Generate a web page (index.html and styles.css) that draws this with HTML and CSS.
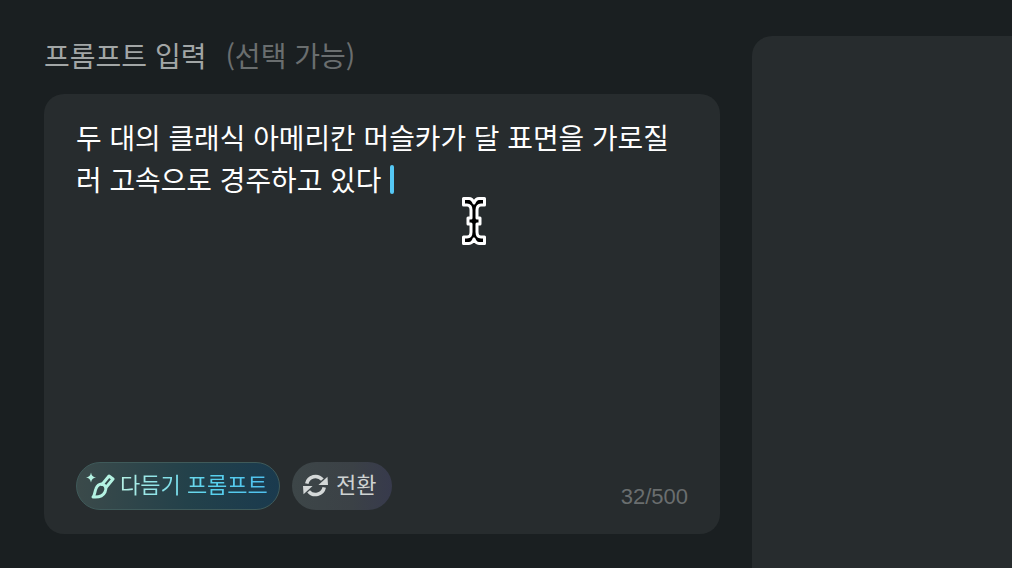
FILE: index.html
```html
<!DOCTYPE html>
<html lang="ko">
<head>
<meta charset="utf-8">
<title>프롬프트 입력</title>
<link rel="stylesheet" href="styles.css">
</head>
<body>
<main class="page">
  <section class="left">
    <h2 class="label">프롬프트 입력<span class="optional">(선택 가능)</span></h2>
    <div class="card">
      <p class="prompt">두 대의 클래식 아메리칸 머슬카가 달 표면을 가로질러 고속으로 경주하고 있다 <span class="caret"></span></p>
      <div class="footer">
        <button class="chip polish">
          <svg class="ico" viewBox="0 0 29 29" fill="none" stroke="#b4f2e2" stroke-width="3" stroke-linecap="round" stroke-linejoin="round">
            <path d="M0 6.500 C3 6.200 4.400 4.800 5 1.500 C5.600 4.800 7 6.200 10 6.500 C7 6.900 5.600 8.200 5 11.500 C4.400 8.200 3 6.900 0 6.500Z" fill="#b4f2e2" stroke="none"/>
            <path d="M16 13.500 L23 5 L27 8 L20 16.500"/>
            <path d="M15.500 13 C20 14 20.800 17.500 19 21 C17 25 12 26.500 7 26 C9 24 8.500 21 10 17.500 C11 15 13 13.100 15.500 13Z"/>
          </svg>
          <span class="polish-text">다듬기 프롬프트</span>
        </button>
        <button class="chip swap">
          <svg class="ico swap-ico" viewBox="0 0 24 24" fill="none" stroke="#d4d8d8" stroke-width="3.400" stroke-linecap="butt">
            <path d="M3.600 10.200 A8.600 8.600 0 0 1 18.600 6.400"/>
            <path d="M20.400 13.800 A8.600 8.600 0 0 1 5.400 17.600"/>
            <path d="M14.800 11.500 L24 11.500 L23.500 3.500 Z" fill="#d4d8d8" stroke="none"/>
            <path d="M9.200 12.500 L0 12.500 L0.500 20.500 Z" fill="#d4d8d8" stroke="none"/>
          </svg>
          <span class="swap-text">전환</span>
        </button>
        <span class="count">32/500</span>
      </div>
      <svg class="ibeam" viewBox="0 0 26 50" width="26" height="50">
        <path d="M2.500 2.500 H8 C10.500 2.500 12 4.500 13 7 C14 4.500 15.500 2.500 18 2.500 H23.500 V9 H20 C17 9 16 11 16 14 V22 H19 V28 H16 V36 C16 39 17 41 20 41 H23.500 V47.500 H18 C15.500 47.500 14 45.500 13 43 C12 45.500 10.500 47.500 8 47.500 H2.500 V41 H6 C9 41 10 39 10 36 V28 H7 V22 H10 V14 C10 11 9 9 6 9 H2.500Z" fill="#000" stroke="#fff" stroke-width="3" stroke-linejoin="round"/>
      </svg>
    </div>
  </section>
  <aside class="panel"></aside>
</main>
</body>
</html>
```
FILE: styles.css
```css
* { box-sizing: border-box; }
html, body { margin: 0; height: 100%; overflow: hidden; }
body {
  background: #1a1f21;
  font-family: "Noto Sans CJK KR", "Liberation Sans", sans-serif;
}
.page {
  display: flex;
  gap: 32px;
  height: 568px;
  padding: 36px 0 0 44px;
}
.left { width: 676px; flex: none; }
.label {
  margin: 0;
  height: 58px;
  font-size: 28px;
  font-weight: 400;
  line-height: 38px;
  color: #a2a6a6;
}
.optional {
  margin-left: 19px;
  color: #6a6e6f;
}
.card {
  position: relative;
  height: 440px;
  background: #272c2e;
  border-radius: 20px;
  padding: 22px 32px 24px;
  display: flex;
  flex-direction: column;
  justify-content: space-between;
}
.prompt {
  margin: 0;
  font-size: 27.86px;
  line-height: 42px;
  color: #fff;
}
.caret {
  display: inline-block;
  width: 4px;
  height: 29px;
  margin-left: 1px;
  vertical-align: -3px;
  border-radius: 2px;
  background: #55c8f5;
}
.footer {
  display: flex;
  align-items: center;
  gap: 12px;
}
.chip {
  display: flex;
  align-items: center;
  height: 48px;
  border-radius: 24px;
  font: inherit;
  font-size: 22px;
  line-height: 44px;
  color: #ced2d2;
}
.polish {
  width: 204px;
  padding: 0 0 2px 9px;
  gap: 5px;
  border: 1px solid #3f5a5a;
  background: linear-gradient(90deg, #3b4a4a 0%, #23414a 55%, #1a3a4e 100%);
}
.polish-text {
  margin-bottom: 4px;
  background: linear-gradient(90deg, #b5f0e4 0%, #59d2ee 60%, #4fc0ee 100%);
  -webkit-background-clip: text;
  background-clip: text;
  color: transparent;
}
.swap {
  width: 100px;
  padding: 0 0 2px 11px;
  gap: 8px;
  border: 0;
  background: linear-gradient(90deg, #3d4648 0%, #3b4146 60%, #373a4c 100%);
}
.swap-text { margin-bottom: 4px; }
.ico { width: 29px; height: 29px; flex: none; }
.swap-ico { width: 25px; height: 25px; }
.count {
  margin-left: auto;
  align-self: flex-end;
  font-size: 22px;
  line-height: 26px;
  color: #6a6e6f;
  font-family: "Liberation Sans", sans-serif;
}
.ibeam {
  position: absolute;
  left: 417px;
  top: 102px;
}
.panel {
  flex: 1;
  background: #272c2e;
  border-radius: 20px 0 0 0;
}
```
